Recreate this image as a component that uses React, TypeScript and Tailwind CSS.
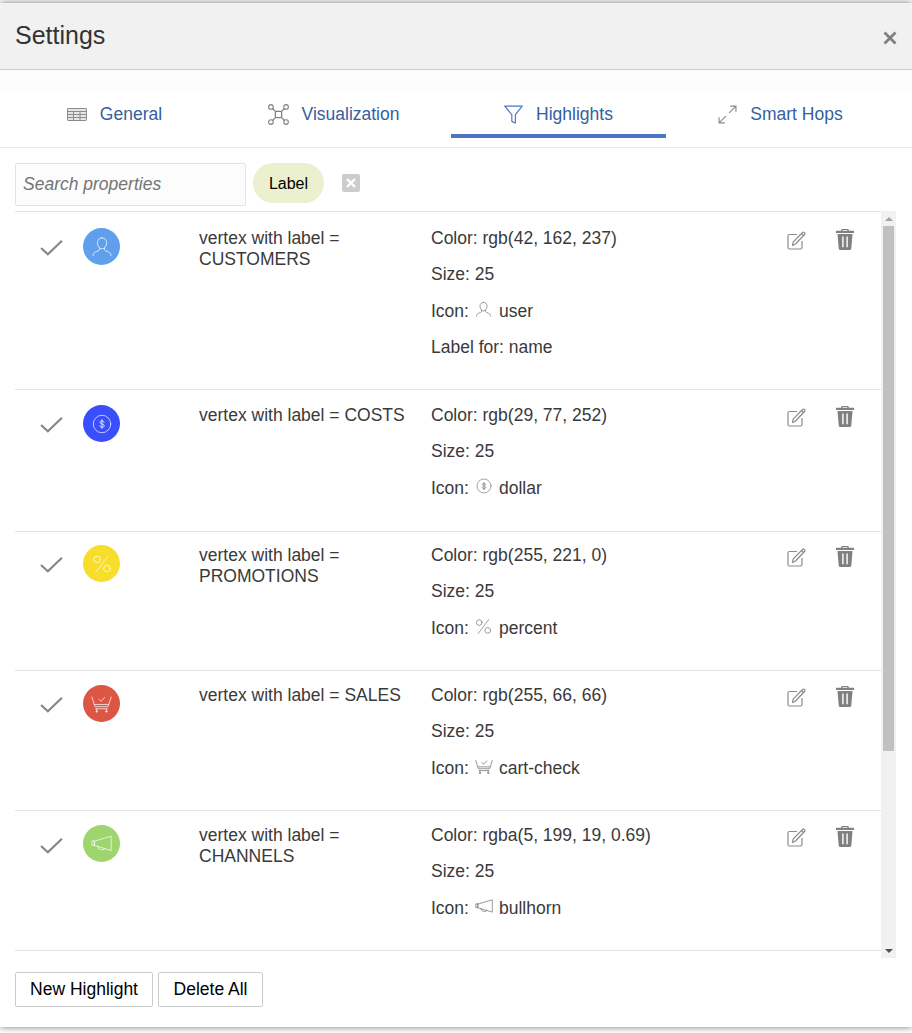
import React from "react";

type P = { className?: string };
const Line = ({ className, children, vb = "0 0 24 24" }: P & { children: React.ReactNode; vb?: string }) => (
  <svg viewBox={vb} fill="none" stroke="currentColor" strokeWidth={1} strokeLinecap="round" strokeLinejoin="round" className={className}>
    {children}
  </svg>
);
const UserIcon = ({ className }: P) => (
  <Line className={className}>
    <path d="M12 2c3 0 5 2.300 5 5.300 0 3.300-2.100 6.700-5 6.700s-5-3.400-5-6.700C7 4.300 9 2 12 2z" />
    <path d="M9.300 13v1.500c0 .8-.5 1.300-1.300 1.600l-3.500 1.500C3 18.200 2.200 19.500 2.200 21.500M14.700 13v1.500c0 .8.500 1.300 1.300 1.600l3.500 1.500c1.500.6 2.300 1.900 2.300 3.900" />
  </Line>
);
const DollarIcon = ({ className }: P) => (
  <Line className={className}>
    <circle cx="12" cy="12" r="10.500" />
    <path d="M14.500 10c0-1.100-1.100-1.800-2.500-1.800s-2.400.7-2.400 1.800c0 2.500 5 1.400 5 4 0 1.200-1.100 1.900-2.600 1.900s-2.600-.8-2.600-1.900M12 6.800v10.400" strokeWidth={1.200} />
  </Line>
);
const PercentIcon = ({ className }: P) => (
  <Line className={className}>
    <path d="M19.500 2 4.500 22" />
    <circle cx="6" cy="6.500" r="4" />
    <circle cx="18" cy="17.500" r="4" />
  </Line>
);
const CartIcon = ({ className }: P) => (
  <Line className={className} vb="0 0 24 20">
    <path d="M1 2 4.500 13H19.500L23 2M4 10.500H20M5.300 15.500H18.700" />
    <path d="M6.500 15.500v2.500M17.500 15.500v2.500" />
    <circle cx="6.500" cy="18.700" r=".8" />
    <circle cx="17.500" cy="18.700" r=".8" />
    <path d="m9 4.500 2.500 2.500 4-4.500" />
  </Line>
);
const HornIcon = ({ className }: P) => (
  <Line className={className} vb="0 0 24 20">
    <path d="M1 7v4.500l3 .2V6.800zM4 6.800 23 1v16.500L4 11.700z" />
    <path d="m8 12.700.6 2.500c.2.900 5 1.700 5.900 1.300.7-.3 1-1 1-1.700" />
  </Line>
);
const Table = ({ className }: P) => (
  <Line className={className} vb="0 0 20 13">
    <rect x=".5" y=".5" width="19" height="12" rx=".6" fill="#e6e6e6" />
    <path d="M.5 3.500h19M.5 6.500h19M.5 9.500h19M6.500 3.500v9M13 3.500v9" />
  </Line>
);
const Network = ({ className }: P) => (
  <Line className={className} vb="0 0 20 20">
    <circle cx="2.800" cy="2.800" r="2.200" />
    <circle cx="17.200" cy="2.800" r="2.200" />
    <circle cx="2.800" cy="17.200" r="2.200" />
    <circle cx="17.200" cy="17.200" r="2.200" />
    <rect x="7" y="7" width="6" height="6" rx="1" strokeWidth={1.200} />
    <path d="M4.500 4.500l2.500 2.500M15.500 4.500 13 7M4.500 15.500 7 13M15.500 15.500 13 13" strokeWidth={1.200} />
  </Line>
);
const Funnel = ({ className }: P) => (
  <Line className={className} vb="0 0 18 18">
    <path d="M.7 1h16.600L10.800 9.200V17l-3.400-1.500V9.200z" strokeWidth={1.100} />
  </Line>
);
const Expand = ({ className }: P) => (
  <Line className={className} vb="0 0 18 18">
    <path d="M10.500 7.500 17 1M11.500 1H17V6.500M7.500 10.500 1 17M1 11.500V17H6.500" strokeWidth={1.100} strokeLinecap="butt" strokeLinejoin="miter" />
  </Line>
);
const Check = ({ className }: P) => (
  <svg viewBox="0 0 22 16" fill="none" stroke="currentColor" strokeWidth={2} className={className}>
    <path d="M1 8.500 7.500 14.500 21 1.500" />
  </svg>
);
const Edit = ({ className }: P) => (
  <svg viewBox="0 0 19 19" fill="none" stroke="currentColor" strokeWidth={1.200} strokeLinejoin="round" className={className}>
    <path d="M10 3.500H2.500C1.500 3.500 1 4 1 5v11.500c0 1 .5 1.500 1.500 1.500h11c1 0 1.500-.5 1.500-1.500V10" />
    <path d="M5.500 14.500 6.300 10.800 15.500 1.500c.6-.6 1.200-.6 1.700-.1l.4.400c.5.500.5 1.100-.1 1.700L8.500 13z M14.500 2.500l2.500 2.500" />
  </svg>
);
const Trash = ({ className }: P) => (
  <svg viewBox="0 0 18 21" className={className}>
    <path fillRule="evenodd" fill="currentColor" d="M5 1.800 5.500.4C5.600.1 5.900 0 6.200 0h5.600c.3 0 .6.100.7.400L13 1.800H17.500c.3 0 .5.200.5.500V4H0V2.300C0 2 .2 1.800.5 1.800zM6.500 1.800h5L11.200 1H6.800zM1.500 5h15l-1.200 14.500c-.1.900-.8 1.500-1.600 1.500H4.300c-.8 0-1.500-.6-1.600-1.500zM6.200 7.500v10.800h1.400V7.500zM10.400 7.500v10.800h1.400V7.500z" />
  </svg>
);

type Row = {
  h: string;
  icon: string;
  check: string;
  detail: string;
  edit: string;
  trash: string;
  label: React.ReactNode;
  color: string;
  bg: string;
  name: string;
  Icon: (p: P) => React.ReactElement;
  extra?: string;
  big: string;
  small: string;
};

const rows: Row[] = [
  { h: "h-[178px]", icon: "mt-[16px]", check: "mt-[27px]", detail: "mt-[8px]", edit: "mt-[19px]", trash: "mt-[17px]", label: <>vertex with label =<br />CUSTOMERS</>, color: "Color: rgb(42, 162, 237)", bg: "bg-[#5f9fec]", name: "user", Icon: UserIcon, extra: "Label for: name", big: "w-[22px] h-[22px]", small: "w-[17px] h-[17px]" },
  { h: "h-[142px]", icon: "mt-[15px]", check: "mt-[26px]", detail: "mt-[7px]", edit: "mt-[18px]", trash: "mt-[16px]", label: <>vertex with label = COSTS</>, color: "Color: rgb(29, 77, 252)", bg: "bg-[#3a4ffb]", name: "dollar", Icon: DollarIcon, big: "w-[20px] h-[20px]", small: "w-[16px] h-[16px]" },
  { h: "h-[139px]", icon: "mt-[13px]", check: "mt-[24px]", detail: "mt-[5px]", edit: "mt-[16px]", trash: "mt-[14px]", label: <>vertex with label =<br />PROMOTIONS</>, color: "Color: rgb(255, 221, 0)", bg: "bg-[#f7de2b]", name: "percent", Icon: PercentIcon, big: "w-[20px] h-[20px]", small: "w-[17px] h-[17px]" },
  { h: "h-[140px]", icon: "mt-[14px]", check: "mt-[25px]", detail: "mt-[6px]", edit: "mt-[17px]", trash: "mt-[15px]", label: <>vertex with label = SALES</>, color: "Color: rgb(255, 66, 66)", bg: "bg-[#dd5544]", name: "cart-check", Icon: CartIcon, big: "w-[21px] h-[18px]", small: "w-[18px] h-[15px]" },
  { h: "h-[140px]", icon: "mt-[14px]", check: "mt-[26px]", detail: "mt-[6px]", edit: "mt-[17px]", trash: "mt-[15px]", label: <>vertex with label =<br />CHANNELS</>, color: "Color: rgba(5, 199, 19, 0.69)", bg: "bg-[#9ed56e]", name: "bullhorn", Icon: HornIcon, big: "w-[21px] h-[18px]", small: "w-[18px] h-[15px]" },
];

const Tab = ({ icon, label, active, cls }: { icon: React.ReactNode; label: string; active?: boolean; cls: string }) => (
  <div className={`${cls} w-[215px] h-[47px] flex items-center justify-center gap-[13px] pt-[3px] border-b-4 ${active ? "border-[#4a78c2]" : "border-transparent"}`}>
    {icon}
    <span className="text-[17.500px] text-[#34609f] leading-[22px]">{label}</span>
  </div>
);

export default function App() {
  return (
    <div className="w-[912px] h-[1033px] overflow-hidden bg-[#fff] pt-[3px] text-[17.500px] text-[#333] [font-family:'Liberation_Sans',Arial,sans-serif]">
      <div className="h-[1024px] bg-white flex flex-col shadow-[0_0_7px_rgba(0,0,0,0.55)]">
        <header className="h-[67px] shrink-0 bg-[#f1f1f1] border-b border-[#cfcfcf] flex items-center justify-between pl-[15px] pr-[14px]">
          <h1 className="text-[25px] leading-[30px] text-[#333] -mt-[3px]">Settings</h1>
          <span className="text-[#7f7f7f] mt-[4px] w-[15px] h-[15px]">
            <svg viewBox="0 0 14 14" stroke="currentColor" strokeWidth={2.800} className="w-[14px] h-[14px]">
              <path d="M1.500 1.500 12.500 12.500M12.500 1.500 1.500 12.500" />
            </svg>
          </span>
        </header>
        <div className="h-[21px] shrink-0 bg-[#fcfcfc]" />
        <nav className="h-[57px] shrink-0 border-b border-[#e9e9e9] flex items-start pl-[7px]">
          <Tab cls="" label="General" icon={<Table className="w-[20px] h-[13px] text-[#8c8c8c]" />} />
          <Tab cls="ml-[4px]" label="Visualization" icon={<Network className="w-[21px] h-[21px] text-[#808080]" />} />
          <Tab cls="ml-[10px]" label="Highlights" active icon={<Funnel className="w-[19px] h-[19px] text-[#4a78c2]" />} />
          <Tab cls="ml-[7px]" label="Smart Hops" icon={<Expand className="w-[19px] h-[19px] text-[#8c8c8c]" />} />
        </nav>
        <div className="h-[63px] shrink-0 flex items-start pl-[15px] pt-[15px]">
          <div className="w-[231px] h-[43px] border border-[#e4e4e4] rounded-[2px] bg-[#fcfcfc] pl-[7px] flex items-center italic text-[#757575]">
            Search properties
          </div>
          <div className="ml-[7px] w-[71px] h-[40px] rounded-[20px] bg-[#ecf0cf] flex items-center justify-center pt-[1px] text-[16px] text-black">
            Label
          </div>
          <span className="ml-[18px] mt-[11px] w-[18px] h-[18px] rounded-[2px] bg-[#cccccc] flex items-center justify-center">
            <svg viewBox="0 0 10 10" stroke="#fff" strokeWidth={2.400} className="w-[10px] h-[10px]">
              <path d="M1 1 9 9M9 1 1 9" />
            </svg>
          </span>
        </div>
        <div className="flex h-[747px] shrink-0 pl-[15px] pr-[16px]">
          <div className="w-[866px] shrink-0">
            {rows.map((r) => (
              <div key={r.name} className={`${r.h} border-t border-[#e4e4e4] flex items-start pl-[25px] text-[#3a3a3a]`}>
                <Check className={`w-[23px] h-[17px] ${r.check} text-[#858585] shrink-0`} />
                <div className={`ml-[20px] ${r.icon} w-[37px] h-[37px] rounded-full ${r.bg} flex items-center justify-center shrink-0 text-[#ffffffd0]`}>
                  <r.Icon className={r.big} />
                </div>
                <div className={`ml-[79px] w-[232px] ${r.icon} leading-[21px] shrink-0`}>{r.label}</div>
                <div className={`${r.detail} w-[340px] shrink-0`}>
                  <div className="h-[36.400px] flex items-center">{r.color}</div>
                  <div className="h-[36.400px] flex items-center">Size: 25</div>
                  <div className="h-[36.400px] flex items-center">
                    Icon:
                    <span className="w-[18px] ml-[6px] mr-[6px] -mt-[3px] flex justify-center shrink-0">
                      <r.Icon className={`${r.small} text-[#777]`} />
                    </span>
                    {r.name}
                  </div>
                  {r.extra && <div className="h-[36.400px] flex items-center">{r.extra}</div>}
                </div>
                <Edit className={`ml-[16px] ${r.edit} w-[19px] h-[19px] text-[#8b8b8b] shrink-0`} />
                <Trash className={`ml-[30px] ${r.trash} w-[18px] h-[21px] text-[#808080] shrink-0`} />
              </div>
            ))}
            <div className="border-t border-[#e4e4e4]" />
          </div>
          <div className="w-[15px] h-full bg-[#f1f1f1] flex flex-col items-center shrink-0">
            <div className="h-[15px] flex items-center justify-center">
              <div className="w-0 h-0 border-x-[4px] border-x-transparent border-b-[4px] border-b-[#a3a3a3]" />
            </div>
            <div className="w-[11px] h-[525px] bg-[#c1c1c1]" />
            <div className="flex-1" />
            <div className="h-[15px] flex items-center justify-center">
              <div className="w-0 h-0 border-x-[4px] border-x-transparent border-t-[4px] border-t-[#505050]" />
            </div>
          </div>
        </div>
        <div className="flex gap-[5px] pl-[15px] pt-[14px] text-black">
          <button className="w-[138px] h-[35px] border border-[#cccccc] rounded-[2px] bg-white text-[17.500px]">New Highlight</button>
          <button className="w-[105px] h-[35px] border border-[#cccccc] rounded-[2px] bg-white text-[17.500px]">Delete All</button>
        </div>
      </div>
    </div>
  );
}
